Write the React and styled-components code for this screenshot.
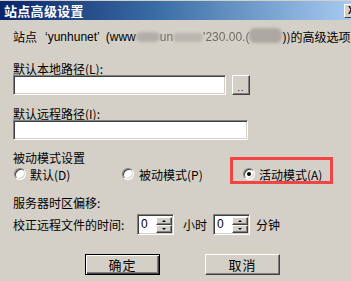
import * as React from 'react';
import styled, { createGlobalStyle } from 'styled-components';

const GlobalStyle = createGlobalStyle`
    html, body {
        margin: 0;
        padding: 0;
        background: #d4d0c8;
    }
`;

const Window = styled.div`
    width: 351px;
    height: 281px;
    overflow: hidden;
    background: #d4d0c8;
    font-family: "Noto Sans CJK SC", "Liberation Sans", sans-serif;
    font-size: 12px;
    color: #000;
    display: flex;
    flex-direction: column;
`;

const TitleBar = styled.div`
    margin-top: 1px;
    height: 19px;
    display: flex;
    align-items: center;
    padding-left: 4px;
    background: linear-gradient(to right, #0a246a, #3a6ea5 45%, #a6caf0);
`;

const TitleText = styled.div`
    color: #fff;
    font-weight: bold;
    font-size: 13px;
    line-height: 14px;
    letter-spacing: 0.3px;
`;

const CloseButton = styled.div`
    margin-left: auto;
    margin-right: -9px;
    width: 16px;
    height: 14px;
    box-sizing: border-box;
    background: #d4d0c8;
    border: 1px solid;
    border-color: #fff #404040 #404040 #fff;
    font-family: "Liberation Sans", sans-serif;
    font-weight: bold;
    font-size: 10px;
    line-height: 12px;
    padding-left: 3px;
`;

const Content = styled.div`
    padding-left: 13px;
    display: flex;
    flex-direction: column;
`;

const InfoLine = styled.div`
    margin-top: 10px;
    line-height: 14px;
    white-space: nowrap;
    display: flex;
    align-items: center;
`;

const Latin = styled.span`
    font-family: "Liberation Sans", sans-serif;
    font-size: 12px;
    margin-left: ${p => p.ml || 0}px;
`;

const Blob = styled.span`
    display: inline-block;
    width: ${p => p.w}px;
    height: ${p => p.h}px;
    margin-top: ${p => p.dy || 0}px;
    background: ${p => p.c || '#b3afa8'};
    border-radius: 6px;
    filter: blur(1.5px);
`;

const Faded = styled.span`
    font-family: "Liberation Sans", sans-serif;
    color: #6e6b66;
    filter: blur(0.6px);
`;

const Label = styled.div`
    margin-top: ${p => p.mt}px;
    line-height: 13px;
    height: 13px;
    white-space: nowrap;
`;

const FieldRow = styled.div`
    display: flex;
    gap: 6px;
`;

const TextBox = styled.div`
    width: ${p => p.w}px;
    height: 20px;
    box-sizing: border-box;
    background: #fff;
    border: 1px solid;
    border-color: #808080 #fff #fff #808080;
    box-shadow: inset 1px 1px #404040, inset -1px -1px #d4d0c8;
`;

const SmallButton = styled.div`
    width: 18px;
    height: 20px;
    box-sizing: border-box;
    background: #d4d0c8;
    border: 1px solid;
    border-color: #fff #404040 #404040 #fff;
    box-shadow: inset -1px -1px #808080;
    font-family: "Liberation Sans", sans-serif;
    font-size: 9px;
    line-height: 24px;
    text-align: center;
    letter-spacing: 1px;
`;

const RadioRow = styled.div`
    margin-top: 3px;
    height: 14px;
    display: grid;
    grid-template-columns: 108px 121px auto;
    margin-left: 1px;
`;

const Option = styled.div`
    position: relative;
    display: flex;
    align-items: center;
    gap: ${p => p.gap || 4}px;
    white-space: nowrap;
    line-height: 13px;
`;

const Radio = styled.span`
    position: relative;
    width: 12px;
    height: 12px;
    box-sizing: border-box;
    border-radius: 50%;
    background: #fff;
    border: 1px solid;
    border-color: #808080 #fff #fff #808080;
    box-shadow: inset 1px 1px #404040, inset -1px -1px #d4d0c8;
    flex-shrink: 0;

    &::after {
        content: '';
        display: ${p => (p.checked ? 'block' : 'none')};
        position: absolute;
        left: 3px;
        top: 3px;
        width: 4px;
        height: 4px;
        border-radius: 50%;
        background: #000;
    }
`;

const Highlight = styled.div`
    position: absolute;
    left: -13px;
    top: -10px;
    width: 103px;
    height: 27px;
    box-sizing: border-box;
    border: 3px solid #f24444;
    pointer-events: none;
`;

const TimeRow = styled.div`
    margin-top: 5px;
    height: 21px;
    display: flex;
    align-items: center;
    white-space: nowrap;
`;

const TimeLabel = styled.span`
    width: 124px;
    line-height: 13px;
`;

const Unit = styled.span`
    margin-left: ${p => p.ml}px;
    margin-right: ${p => p.mr}px;
    line-height: 13px;
`;

const Spinner = styled.div`
    width: 37px;
    height: 21px;
    box-sizing: border-box;
    display: flex;
    background: #fff;
    border: 1px solid;
    border-color: #808080 #fff #fff #808080;
    box-shadow: inset 1px 1px #404040, inset -1px -1px #d4d0c8;
    padding: 2px 1px 1px 2px;
`;

const SpinValue = styled.div`
    flex: 1;
    font-family: "Liberation Sans", sans-serif;
    font-size: 12px;
    line-height: 15px;
    padding-left: 1px;
`;

const SpinButtons = styled.div`
    width: 16px;
    display: flex;
    flex-direction: column;
`;

const SpinBtn = styled.div`
    flex: 1;
    box-sizing: border-box;
    background: #d4d0c8;
    border: 1px solid;
    border-color: #fff #404040 #404040 #fff;
    box-shadow: inset -1px -1px #808080;
    display: flex;
    align-items: center;
    justify-content: center;

    &::after {
        content: '';
        width: 0;
        height: 0;
        border-left: 2px solid transparent;
        border-right: 2px solid transparent;
        ${p => (p.up ? 'border-bottom: 2px solid #000;' : 'border-top: 2px solid #000;')}
    }
`;

const ButtonRow = styled.div`
    margin-top: 19px;
    padding-left: 72px;
    display: flex;
    gap: 45px;
`;

const DialogButton = styled.div`
    width: 75px;
    height: 21px;
    box-sizing: border-box;
    background: #d4d0c8;
    border: 1px solid ${p => (p.primary ? '#000' : '#fff')};
    ${p => !p.primary && 'border-color: #fff #404040 #404040 #fff;'}
    box-shadow: ${p =>
        p.primary
            ? 'inset 1px 1px #fff, inset -1px -1px #404040, inset -2px -2px #808080'
            : 'inset -1px -1px #808080'};
    font-size: 13px;
    line-height: 19px;
    text-align: center;
    letter-spacing: 1px;
`;

const NumberSpinner = ({ value }) => (
    <Spinner>
        <SpinValue>{value}</SpinValue>
        <SpinButtons>
            <SpinBtn up />
            <SpinBtn />
        </SpinButtons>
    </Spinner>
);

const App = () => {
    return (
        <Window>
            <GlobalStyle />
            <TitleBar>
                <TitleText>站点高级设置</TitleText>
                <CloseButton>X</CloseButton>
            </TitleBar>
            <Content>
                <InfoLine>
                    <span>站点</span>
                    <Latin ml={8}>‘yunhunet’</Latin>
                    <Latin ml={6}>(www</Latin>
                    <Blob w={24} h={10} />
                    <Faded>un</Faded>
                    <Blob w={30} h={9} c="#bab6af" />
                    <Faded>'230.00.(</Faded>
                    <Blob w={33} h={15} dy={-3} c="#aca8a1" />
                    <Latin>)</Latin>
                    <span>)的高级选项</span>
                </InfoLine>

                <Label mt={18}>默认本地路径(L):</Label>
                <FieldRow>
                    <TextBox w={213} />
                    <SmallButton>..</SmallButton>
                </FieldRow>

                <Label mt={12}>默认远程路径(I):</Label>
                <FieldRow>
                    <TextBox w={235} />
                </FieldRow>

                <Label mt={11}>被动模式设置</Label>
                <RadioRow>
                    <Option>
                        <Radio />
                        <span>默认(D)</span>
                    </Option>
                    <Option gap={5}>
                        <Radio />
                        <span>被动模式(P)</span>
                    </Option>
                    <Option>
                        <Radio checked />
                        <span>活动模式(A)</span>
                        <Highlight />
                    </Option>
                </RadioRow>

                <Label mt={15}>服务器时区偏移:</Label>
                <TimeRow>
                    <TimeLabel>校正远程文件的时间:</TimeLabel>
                    <NumberSpinner value="0" />
                    <Unit ml={9} mr={6}>小时</Unit>
                    <NumberSpinner value="0" />
                    <Unit ml={6} mr={0}>分钟</Unit>
                </TimeRow>

                <ButtonRow>
                    <DialogButton primary>确定</DialogButton>
                    <DialogButton>取消</DialogButton>
                </ButtonRow>
            </Content>
        </Window>
    );
};

export default App;
